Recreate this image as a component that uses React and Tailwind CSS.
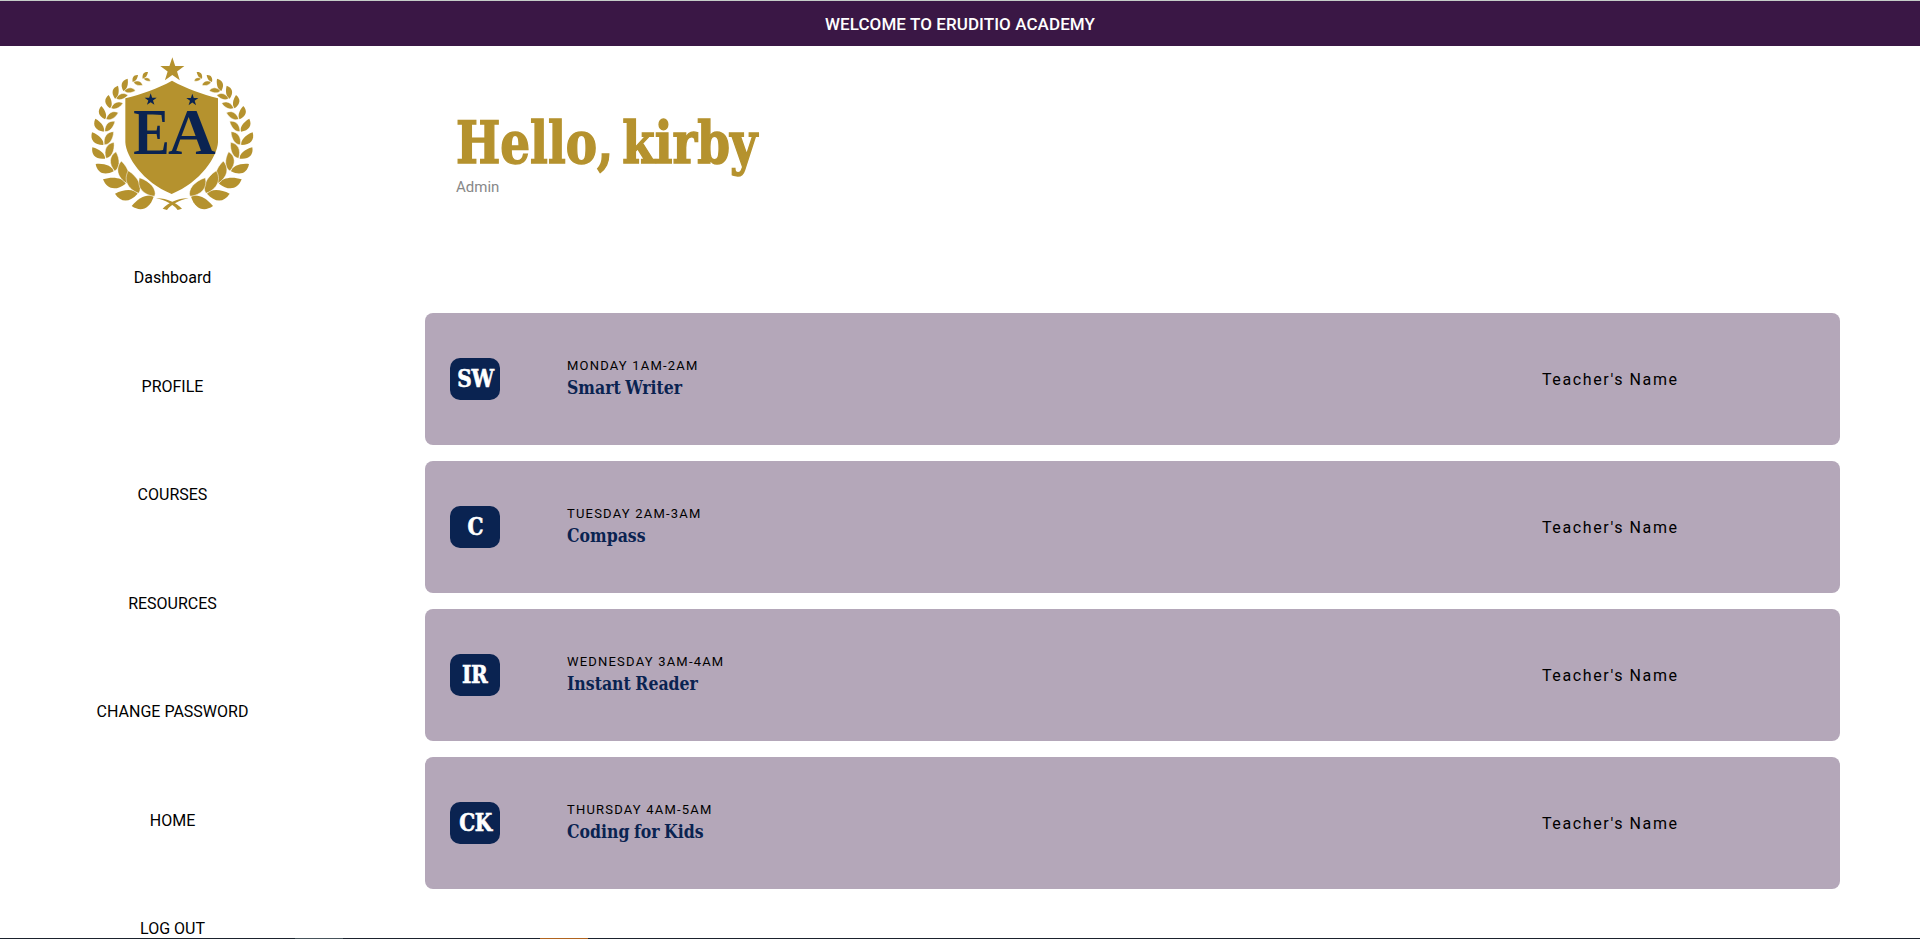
const LEAVES = [
  [189, 101, 204, 81, 212, 108],
  [159, 111, 174, 90, 188, 121],
  [131, 138, 143, 101, 166, 137],
  [106, 161, 114, 122, 144, 151],
  [91, 190, 86, 150, 129, 175],
  [76, 223, 64, 183, 115, 203],
  [72, 260, 46, 221, 105, 229],
  [71, 300, 36, 262, 101, 260],
  [76, 341, 37, 307, 102, 292],
  [102, 379, 47, 357, 108, 320],
  [138, 416, 69, 403, 124, 348],
  [174, 446, 105, 446, 145, 377],
  [222, 455, 155, 483, 178, 398],
];

function leafPath(bx, by, tx, ty, outer, inner) {
  const dx = tx - bx;
  const dy = ty - by;
  const at = (t, w) => `${bx + dx * t - dy * w} ${by + dy * t + dx * w}`;
  return `M${bx} ${by}C${at(0.15, outer)} ${at(0.6, outer)} ${tx} ${ty}C${at(0.75, -inner)} ${at(0.35, -inner)} ${bx} ${by}Z`;
}

function starPoints(cx, cy, r) {
  return Array.from({ length: 10 }, (_, i) => {
    const radius = i % 2 ? r * 0.39 : r;
    const a = (Math.PI / 5) * i - Math.PI / 2;
    return `${(cx + radius * Math.cos(a)).toFixed(1)},${(cy + radius * Math.sin(a)).toFixed(1)}`;
  }).join(" ");
}

function Branch() {
  return (
    <g>
      {LEAVES.map(([bx, by, ox, oy, ix, iy]) => (
        <g key={`${bx}-${by}`}>
          <path d={leafPath(bx - 1, by, ox, oy, 0.22, 0.4)} />
          <path d={leafPath(bx + 2, by - 1, ix, iy, 0.26, 0.34)} stroke="#fff" strokeWidth="1.5" />
        </g>
      ))}
      <path d="M228 460C256 458 288 472 306 491L293 495C280 478 256 466 228 460Z" />
    </g>
  );
}

function Logo() {
  return (
    <svg viewBox="0 0 555 525" className="h-[175px] w-[185px]" fill="#b5922e" role="img">
      <polygon points={starPoints(277, 75, 38)} />
      <Branch />
      <g transform="translate(554 0) scale(-1 1)">
        <Branch />
      </g>
      <path d="M276 107C320 131 366 147 414 160V292C412 334 362 412 275 447C188 412 138 334 136 292V160C186 147 232 131 276 107Z" />
      <g fill="#0a2351" fontFamily="'Liberation Serif', serif" fontWeight="700" fontSize="198">
        <polygon points={starPoints(212, 164, 19)} />
        <polygon points={starPoints(337, 165, 19)} />
        <text transform="translate(160 327) scale(0.83 1)">E</text>
        <text transform="translate(264 327) scale(1 1)">A</text>
      </g>
    </svg>
  );
}

const NAV = ["Dashboard", "PROFILE", "COURSES", "RESOURCES", "CHANGE PASSWORD", "HOME", "LOG OUT"];

const COURSES = [
  { code: "SW", time: "MONDAY 1AM-2AM", title: "Smart Writer" },
  { code: "C", time: "TUESDAY 2AM-3AM", title: "Compass" },
  { code: "IR", time: "WEDNESDAY 3AM-4AM", title: "Instant Reader" },
  { code: "CK", time: "THURSDAY 4AM-5AM", title: "Coding for Kids" },
];

const SLAB = "font-['DejaVu_Serif_Condensed','DejaVu_Serif',serif] font-bold [font-stretch:condensed]";

function CourseCard({ code, time, title }) {
  return (
    <article className="flex h-[132px] items-center rounded-lg bg-[#b4a7b9] pl-[25px]">
      <div className="flex h-[42px] w-[50px] items-center justify-center rounded-[10px] bg-[#0a2351] text-white">
        <span className={`${SLAB} inline-block scale-x-[0.93] text-2xl leading-none tracking-[-0.5px] [-webkit-text-stroke:0.6px_white]`}>
          {code}
        </span>
      </div>
      <div className="ml-[67px] flex-1 pb-px">
        <p className="text-[13px] leading-[18px] tracking-[1.2px]">{time}</p>
        <h2 className={`${SLAB} origin-left scale-x-[0.92] text-[19px] leading-[25px] [word-spacing:-1px] text-[#0a2351]`}>{title}</h2>
      </div>
      <p className="w-[298px] pt-px text-base tracking-[1.6px]">Teacher's Name</p>
    </article>
  );
}

export default function App() {
  return (
    <div className="flex h-[939px] flex-col overflow-hidden bg-white font-[Roboto,sans-serif] text-black">
      <header className="flex h-[46px] shrink-0 items-center justify-center border-t border-[#c5cdc8] bg-[#3a1745] pt-[3px] text-[17px] font-medium tracking-[0.08px] text-white">
        WELCOME TO ERUDITIO ACADEMY
      </header>
      <div className="flex min-h-0 flex-1 overflow-hidden">
        <aside className="flex w-[345px] shrink-0 flex-col items-center">
          <div className="-mt-px">
            <Logo />
          </div>
          <nav className="mt-[46px] flex flex-col items-center gap-[84.5px]">
            {NAV.map((item) => (
              <a key={item} className="text-base leading-6">
                {item}
              </a>
            ))}
          </nav>
        </aside>
        <main className="flex-1 pr-20 pl-20">
          <div className="h-[267px] pt-[62px] pl-[31px]">
            <h1
              className={`${SLAB} block w-fit origin-left scale-x-[0.914] text-[57px] leading-[69px] [word-spacing:-8px] whitespace-nowrap text-[#b5922e] [-webkit-text-stroke:1.4px_#b5922e]`}
            >
              Hello, kirby
            </h1>
            <p className="text-[15px] leading-5 text-[#888888]">Admin</p>
          </div>
          <div className="flex flex-col gap-4">
            {COURSES.map((course) => (
              <CourseCard key={course.code} {...course} />
            ))}
          </div>
        </main>
      </div>
      <div className="flex h-px shrink-0 bg-[#1b222d]">
        <span className="ml-[295px] w-12 bg-[#47545b]" />
        <span className="ml-[197px] w-12 bg-[#b0641f]" />
      </div>
    </div>
  );
}
